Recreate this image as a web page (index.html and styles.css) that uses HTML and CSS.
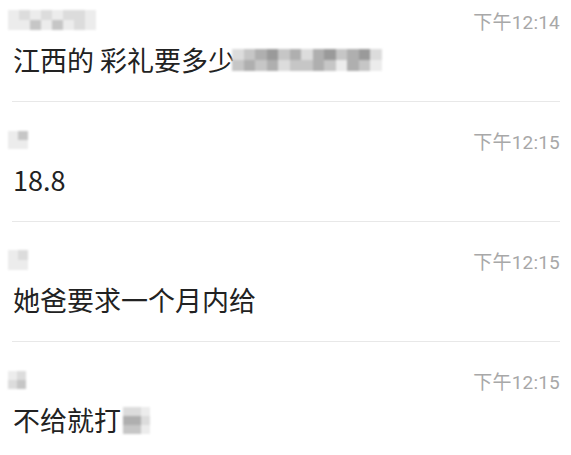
FILE: index.html
```html
<!DOCTYPE html>
<html lang="zh">
<head>
  <meta charset="UTF-8" />
  <meta name="viewport" content="width=device-width, initial-scale=1.0" />
  <title>聊天记录</title>
  <link rel="stylesheet" href="styles.css">
</head>
<body>
  <ul class="chat">
    <li class="msg">
      <div class="head">
        <span class="mosaic name-1">
          <i class="g1"></i><i class="g2"></i><i class="g1"></i><i class="g2"></i><i class="g1"></i><i class="g2"></i><i class="g2"></i><i class="g1"></i>
          <i class="g1"></i><i class="g1"></i><i class="g3"></i><i class="g1"></i><i class="g3"></i><i class="g1"></i><i class="g2"></i><i class="g1"></i>
        </span>
        <span class="time">下午12:14</span>
      </div>
      <p class="text">江西的 彩礼要多少<span class="mosaic blur-1">
          <i class="g2"></i><i class="g3"></i><i class="g4"></i><i class="g5"></i><i class="g3"></i><i class="g4"></i><i class="g2"></i><i class="g4"></i><i class="g5"></i><i class="g3"></i><i class="g4"></i><i class="g5"></i><i class="g2"></i>
          <i class="g3"></i><i class="g4"></i><i class="g3"></i><i class="g4"></i><i class="g2"></i><i class="g3"></i><i class="g3"></i><i class="g4"></i><i class="g3"></i><i class="g1"></i><i class="g4"></i><i class="g3"></i><i class="g1"></i>
        </span></p>
    </li>
    <li class="msg">
      <div class="head">
        <span class="mosaic name-2">
          <i class="g1"></i><i class="g3"></i><i class="g0"></i>
          <i class="g1"></i><i class="g1"></i><i class="g0"></i>
        </span>
        <span class="time">下午12:15</span>
      </div>
      <p class="text">18.8</p>
    </li>
    <li class="msg">
      <div class="head">
        <span class="mosaic name-3">
          <i class="g1"></i><i class="g2"></i>
          <i class="g1"></i><i class="g1"></i>
        </span>
        <span class="time">下午12:15</span>
      </div>
      <p class="text">她爸要求一个月内给</p>
    </li>
    <li class="msg">
      <div class="head">
        <span class="mosaic name-4">
          <i class="g1"></i><i class="g2"></i><i class="g0"></i>
          <i class="g2"></i><i class="g3"></i><i class="g0"></i>
        </span>
        <span class="time">下午12:15</span>
      </div>
      <p class="text">不给就打<span class="mosaic blur-4">
          <i class="g2"></i><i class="g2"></i><i class="g1"></i>
          <i class="g4"></i><i class="g4"></i><i class="g2"></i>
          <i class="g3"></i><i class="g3"></i><i class="g1"></i>
        </span></p>
    </li>
  </ul>
</body>
</html>
```

FILE: styles.css
```css
:root {
  --text: #222222;
  --muted: #a8a8a8;
  --line: #e8e8e8;
}

body {
  margin: 0;
  background: #ffffff;
  color: var(--text);
  font-family: 'Noto Sans CJK SC', 'Noto Sans', sans-serif;
  overflow: hidden;
}

.chat {
  list-style: none;
  margin: 0;
  padding: 0;
}

.msg {
  margin: 0 11px 0 12px;
  padding: 26px 0 23px;
  border-bottom: 1px solid var(--line);
}

.msg:first-child {
  padding-top: 8px;
}

.head {
  display: flex;
  justify-content: space-between;
  align-items: center;
  height: 24px;
  margin-left: -4px;
}

.time {
  font-family: 'Roboto', 'Noto Sans CJK SC', sans-serif;
  font-size: 19px;
  color: var(--muted);
  letter-spacing: 0.2px;
}

.text {
  margin: 10px 0 0 1px;
  font-size: 27px;
  line-height: 36px;
  display: flex;
  align-items: center;
}

/* pixelated (hidden) bits */
.mosaic {
  display: inline-grid;
  filter: blur(0.8px);
}

.mosaic i {
  display: block;
}

.g0 { background: #ffffff; }
.g1 { background: #ececec; }
.g2 { background: #dcdcdc; }
.g3 { background: #c6c6c6; }
.g4 { background: #afafaf; }
.g5 { background: #9a9a9a; }

.name-1 {
  grid-template-columns: repeat(8, 11px);
  grid-auto-rows: 10px;
}

.name-2 {
  grid-template-columns: repeat(3, 10px);
  grid-auto-rows: 9px;
}

.name-3 {
  grid-template-columns: repeat(2, 10px);
  grid-auto-rows: 10px;
}

.name-4 {
  grid-template-columns: repeat(3, 9px);
  grid-auto-rows: 9px;
}

.blur-1 {
  grid-template-columns: repeat(13, 11.5px);
  grid-auto-rows: 11px;
  margin-left: -3px;
}

.blur-4 {
  grid-template-columns: repeat(3, 9px);
  grid-auto-rows: 9px;
  margin-left: 2px;
}
```
